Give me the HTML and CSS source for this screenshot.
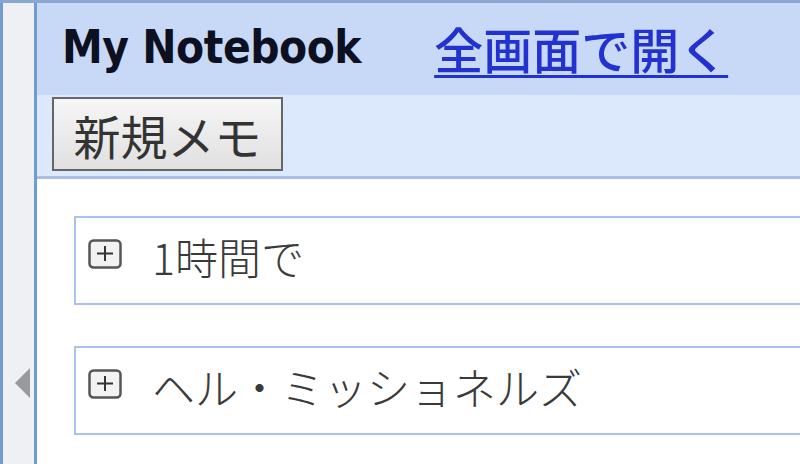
FILE: index.html
```html
<!DOCTYPE html>
<html lang="ja">
<head>
<meta charset="utf-8">
<title>My Notebook</title>
<link rel="stylesheet" href="styles.css">
</head>
<body>
<div class="frame">
  <div class="rail"><span class="rail-arrow"></span></div>
  <div class="main">
    <div class="header">
      <span class="title">My Notebook</span>
      <a class="open-link" href="#">全画面で開く</a>
    </div>
    <div class="toolbar">
      <button class="new-btn" type="button">新規メモ</button>
    </div>
    <div class="content">
      <div class="item">
        <svg class="expand" viewBox="0 0 34 30" width="34" height="30">
          <rect x="1.5" y="1.5" width="31" height="27" rx="4" fill="#f2f2f2" stroke="#555" stroke-width="2.5"/>
          <path d="M17 7v15M9 14.5h16" stroke="#333" stroke-width="2"/>
        </svg>
        <span class="item-text">1時間で</span>
      </div>
      <div class="item">
        <svg class="expand" viewBox="0 0 34 30" width="34" height="30">
          <rect x="1.5" y="1.5" width="31" height="27" rx="4" fill="#f2f2f2" stroke="#555" stroke-width="2.5"/>
          <path d="M17 7v15M9 14.5h16" stroke="#333" stroke-width="2"/>
        </svg>
        <span class="item-text">ヘル・ミッショネルズ</span>
      </div>
    </div>
  </div>
</div>
</body>
</html>
```

FILE: styles.css
```css
html, body {
  margin: 0;
  padding: 0;
  width: 800px;
  height: 464px;
  overflow: hidden;
  background: #ffffff;
}

.frame {
  display: flex;
  height: 461px;
  border-top: 3px solid #8ba7cf;
}

.rail {
  width: 37px;
  flex: none;
  background: #eef0f3;
  border-left: 3px solid #6f9bd0;
  border-right: 3px solid #6f9bd0;
  display: flex;
  justify-content: flex-end;
  padding: 365px 4px 0 0;
  box-sizing: border-box;
}

.rail-arrow {
  width: 0;
  height: 0;
  border-top: 15px solid transparent;
  border-bottom: 15px solid transparent;
  border-right: 15px solid #9a9a9a;
}

.main {
  flex: 1;
  display: flex;
  flex-direction: column;
  min-width: 0;
}

.header {
  height: 92px;
  background: #c8d9f7;
  display: flex;
  align-items: center;
  padding-left: 25px;
  gap: 73px;
}

.title {
  font-family: "DejaVu Sans", sans-serif;
  font-weight: bold;
  font-size: 41px;
  color: #0d1020;
  letter-spacing: -0.5px;
  margin-top: -4px;
  transform: scaleY(1.12);
}

.open-link {
  font-family: "Noto Sans CJK JP", sans-serif;
  font-weight: 500;
  font-size: 49px;
  line-height: 1;
  color: #2232d0;
  text-decoration: underline;
  text-decoration-thickness: 3px;
  text-underline-offset: 6px;
  margin-top: -4px;
}

.toolbar {
  height: 79px;
  background: #dce8fc;
  border-bottom: 3px solid #a9c0e3;
  padding: 2px 0 0 15px;
}

.new-btn {
  width: 231px;
  height: 74px;
  padding: 0;
  border: 2px solid #666;
  border-radius: 0;
  background: linear-gradient(#f6f6f6, #e0e0e0);
  font-family: "Noto Sans CJK JP", sans-serif;
  font-size: 47px;
  line-height: 1;
  color: #333;
}

.content {
  flex: 1;
  background: #ffffff;
  padding: 37px 0 0 37px;
  display: flex;
  flex-direction: column;
  gap: 41px;
}

.item {
  height: 85px;
  border: 2px solid #a9c4ec;
  border-right: none;
  display: flex;
  align-items: center;
  padding-left: 12px;
  gap: 30px;
}

.expand {
  flex: none;
  margin-top: -14px;
}

.item-text {
  font-family: "Noto Sans CJK JP", sans-serif;
  font-weight: 300;
  font-size: 43px;
  color: #3a3a3a;
  margin-top: -9px;
}
```
